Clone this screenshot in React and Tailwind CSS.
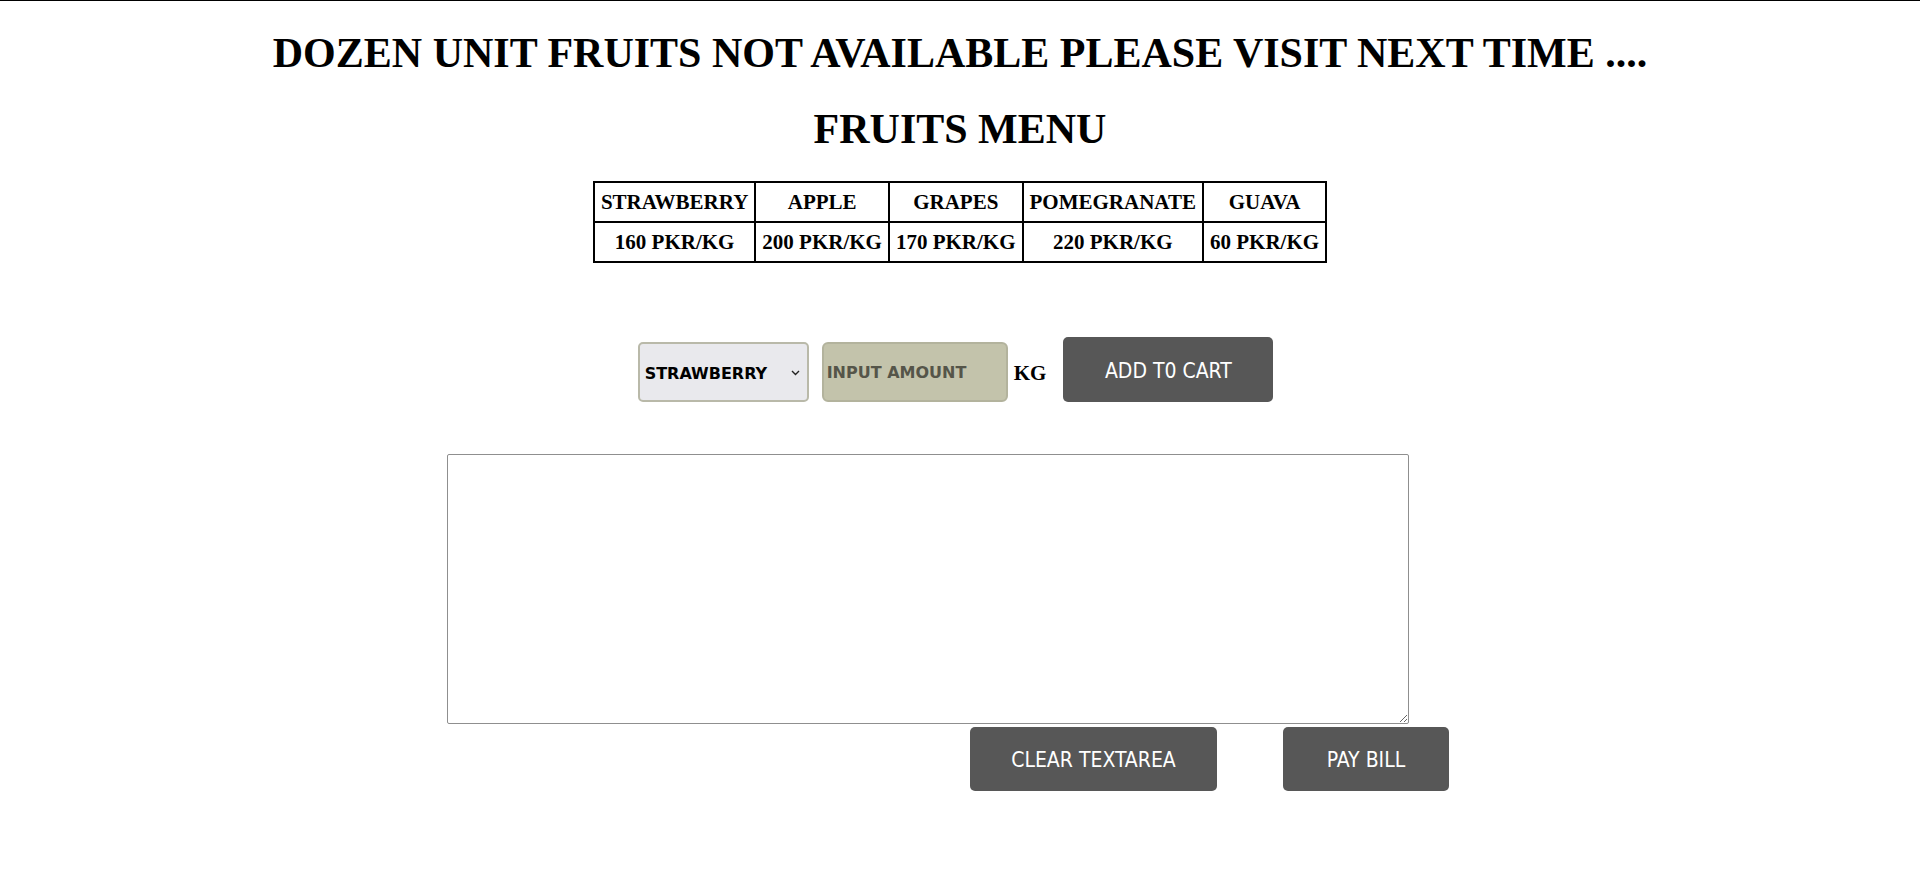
import React, { useState } from "react";

const fruits = [
  { name: "STRAWBERRY", price: "160 PKR/KG" },
  { name: "APPLE", price: "200 PKR/KG" },
  { name: "GRAPES", price: "170 PKR/KG" },
  { name: "POMEGRANATE", price: "220 PKR/KG" },
  { name: "GUAVA", price: "60 PKR/KG" },
];

const App = () => {
  const [fruit, setFruit] = useState("STRAWBERRY");
  const [amount, setAmount] = useState("");
  const [bill, setBill] = useState("");

  return (
    <div className="min-h-screen bg-white border-t border-black font-['Liberation_Serif',serif] text-black">
      <h1 className="pt-[28px] text-center text-[42px] leading-[48px] font-bold">
        DOZEN UNIT FRUITS NOT AVAILABLE PLEASE VISIT NEXT TIME ....
      </h1>
      <h2 className="mt-[28px] text-center text-[42px] leading-[48px] font-bold">
        FRUITS MENU
      </h2>

      {/* Menu table */}
      <table className="mx-auto mt-[28px] border-collapse border-2 border-black text-[21px] leading-[22px] font-bold">
        <tbody>
          <tr>
            {fruits.map((f) => (
              <td key={f.name} className="border-2 border-black px-[6px] py-2 text-center">
                {f.name}
              </td>
            ))}
          </tr>
          <tr>
            {fruits.map((f) => (
              <td key={f.price} className="border-2 border-black px-[6px] py-2 text-center">
                {f.price}
              </td>
            ))}
          </tr>
        </tbody>
      </table>

      {/* Order row */}
      <div className="mt-[74px] flex items-end justify-center pr-[9px]">
        <div className="relative w-[171px] h-[60px]">
          <select
            value={fruit}
            onChange={(e) => setFruit(e.target.value)}
            className="appearance-none w-full h-full rounded-[5px] border-2 border-[#b9b9a9] bg-[#e9e9ed] pl-[5px] pt-[3px] text-[16px] font-bold font-['DejaVu_Sans',sans-serif] text-black outline-none"
          >
            {fruits.map((f) => (
              <option key={f.name} value={f.name}>
                {f.name}
              </option>
            ))}
          </select>
          <svg
            className="absolute right-[9px] top-[28px] w-[9px] h-[6px] pointer-events-none"
            viewBox="0 0 9 6"
            fill="none"
            stroke="#222"
            strokeWidth="1.4"
          >
            <path d="M1 1l3.5 3.5L8 1" />
          </svg>
        </div>
        <input
          type="text"
          value={amount}
          onChange={(e) => setAmount(e.target.value)}
          placeholder="INPUT AMOUNT"
          className="ml-[13px] w-[186px] h-[60px] rounded-[6px] border-2 border-[#b3b39d] bg-[#c3c3ab] pl-[3px] text-[16px] font-bold font-['DejaVu_Sans',sans-serif] placeholder:text-[#555549] outline-none"
        />
        <span className="ml-[6px] mb-[17px] text-[21px] leading-[24px] font-bold">KG</span>
        <button className="ml-[17px] w-[210px] h-[65px] pt-[4px] rounded-[5px] bg-[#575757] text-white text-[21px] font-['DejaVu_Sans_Condensed','DejaVu_Sans',sans-serif] font-stretch-condensed">
          ADD T0 CART
        </button>
      </div>

      {/* Bill area */}
      <div className="mt-[52px] flex justify-center pr-[64px]">
        <textarea
          value={bill}
          onChange={(e) => setBill(e.target.value)}
          className="block w-[962px] h-[270px] rounded-[2px] border border-[#8f8f8f] bg-white outline-none"
        />
      </div>

      <div className="mt-[3px] flex justify-end gap-[66px] pr-[471px]">
        <button
          onClick={() => setBill("")}
          className="w-[247px] h-[64px] pt-[4px] rounded-[5px] bg-[#575757] text-white text-[21px] font-['DejaVu_Sans_Condensed','DejaVu_Sans',sans-serif] font-stretch-condensed"
        >
          CLEAR TEXTAREA
        </button>
        <button className="w-[166px] h-[64px] pt-[4px] rounded-[5px] bg-[#575757] text-white text-[21px] font-['DejaVu_Sans_Condensed','DejaVu_Sans',sans-serif] font-stretch-condensed">
          PAY BILL
        </button>
      </div>
    </div>
  );
};

export default App;
